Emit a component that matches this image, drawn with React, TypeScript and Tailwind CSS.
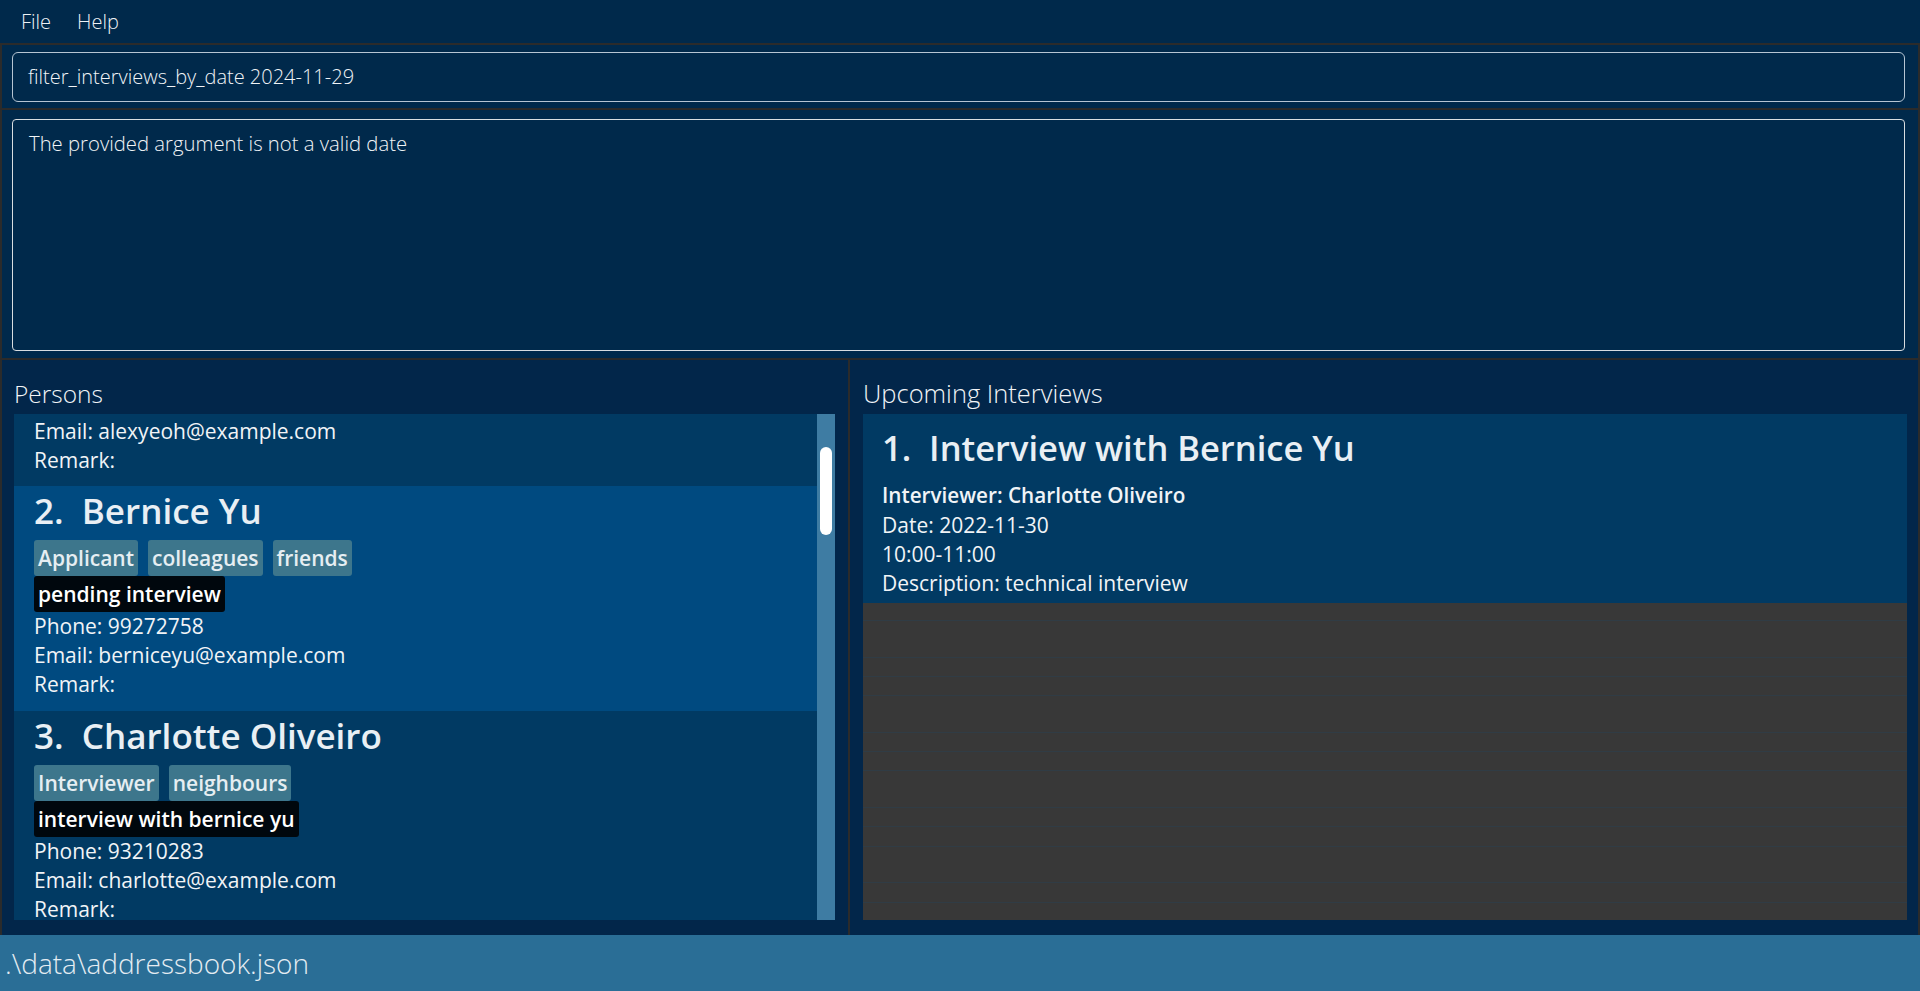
import React from "react";

type Person = {
  index: number;
  name: string;
  tags: string[];
  note: string;
  phone: string;
  email: string;
  selected?: boolean;
};

const people: Person[] = [
  {
    index: 2,
    name: "Bernice Yu",
    tags: ["Applicant", "colleagues", "friends"],
    note: "pending interview",
    phone: "99272758",
    email: "berniceyu@example.com",
    selected: true,
  },
  {
    index: 3,
    name: "Charlotte Oliveiro",
    tags: ["Interviewer", "neighbours"],
    note: "interview with bernice yu",
    phone: "93210283",
    email: "charlotte@example.com",
  },
];

// empty ListView cells under the single interview card
const emptyRows = [18, 37, 19, 19, 37, 19, 19, 37, 19, 20, 36, 20, 17];

function Field({ children }: { children: React.ReactNode }) {
  return <div className="h-[29px] leading-[29px] text-[21px] whitespace-pre">{children}</div>;
}

function PersonCard({ p }: { p: Person }) {
  return (
    <div className={`pl-[20px] pt-[4px] pb-[12px] ${p.selected ? "bg-[#004a80]" : "bg-[#013a63]"}`}>
      <div className="h-[42px] leading-[42px] text-[35px] font-semibold text-[#e9eff4] whitespace-pre">
        {p.index}.  {p.name}
      </div>
      <div className="mt-[8px] flex gap-[10px]">
        {p.tags.map((t) => (
          <span
            key={t}
            className="h-[36px] leading-[36px] px-[4px] rounded-[3px] bg-[#3d768c] text-[21px] font-semibold text-[#e6eef2]"
          >
            {t}
          </span>
        ))}
      </div>
      <div className="flex">
        <span className="h-[36px] leading-[36px] px-[4px] rounded-[3px] bg-[#00070d] text-[21px] font-semibold text-white">
          {p.note}
        </span>
      </div>
      <Field>Phone: {p.phone}</Field>
      <Field>Email: {p.email}</Field>
      <Field>Remark: </Field>
    </div>
  );
}

export default function App() {
  return (
    <div className="w-[1920px] h-[991px] overflow-hidden flex flex-col bg-[#00294b] text-[#f1f4f7] font-['Open_Sans',sans-serif]">
      {/* menu bar */}
      <div className="h-[43px] flex items-center gap-[26px] pl-[21px] text-[20px] font-light text-[#eef2f5]">
        <span>File</span>
        <span>Help</span>
      </div>
      <div className="h-[2px] bg-[#2b2b2b]" />

      {/* command box */}
      <div className="h-[63px] border-x-2 border-[#2b2b2b] pt-[7px] pb-[6px] pl-[10px] pr-[13px]">
        <div className="h-full rounded-[6px] border-[1.5px] border-[#b6c5d3] flex items-center px-[15px] text-[20px] font-light">
          filter_interviews_by_date 2024-11-29
        </div>
      </div>
      <div className="h-[2px] bg-[#2b2b2b]" />

      {/* result display */}
      <div className="h-[248px] border-x-2 border-[#2b2b2b] pt-[9px] pb-[7px] pl-[10px] pr-[13px]">
        <div className="h-full rounded-[4px] border border-[#d9dde0] px-[16px] pt-[8px] text-[20.3px] font-light">
          The provided argument is not a valid date
        </div>
      </div>
      <div className="h-[2px] bg-[#2b2b2b]" />

      {/* list panels */}
      <div className="h-[575px] flex bg-[#02264a]">
        <div className="w-[850px] border-x-2 border-[#2b2b2b] pt-[18px] pl-[12px] pr-[13px]">
          <div className="h-[31px] leading-[31px] text-[24.5px] font-light">Persons</div>
          <div className="mt-[5px] h-[506px] flex overflow-hidden">
            <div className="flex-1 overflow-hidden">
              <div className="pl-[20px] pt-[3px] pb-[11px] bg-[#013a63]">
                <Field>Email: alexyeoh@example.com</Field>
                <Field>Remark: </Field>
              </div>
              {people.map((p) => (
                <PersonCard key={p.index} p={p} />
              ))}
            </div>
            <div className="w-[18px] bg-[#3e7ca3] pt-[33px] flex justify-center">
              <div className="w-[12px] h-[88px] rounded-full bg-white" />
            </div>
          </div>
        </div>

        <div className="flex-1 border-r-2 border-[#2b2b2b] pt-[18px] pl-[13px] pr-[11px]">
          <div className="h-[31px] leading-[31px] text-[25.5px] font-light">Upcoming Interviews</div>
          <div className="mt-[5px] h-[506px] overflow-hidden flex flex-col">
            <div className="bg-[#013a63] pl-[19px] pt-[13px] pb-[5px]">
              <div className="h-[42px] leading-[42px] text-[34.5px] font-semibold text-[#e9eff4] whitespace-pre">
                1.  Interview with Bernice Yu
              </div>
              <div className="mt-[10px] h-[32px] leading-[32px] text-[20.7px] font-semibold">
                Interviewer: Charlotte Oliveiro
              </div>
              <Field>Date: 2022-11-30</Field>
              <Field>10:00-11:00</Field>
              <Field>Description: technical interview</Field>
            </div>
            {emptyRows.map((h, i) => (
              <div
                key={i}
                style={{ height: h }}
                className={`bg-[#383838] ${i < emptyRows.length - 1 ? "border-b border-[#303c45]" : ""}`}
              />
            ))}
          </div>
        </div>
      </div>

      {/* status bar */}
      <div className="flex-1 bg-[#2a6e96] flex items-center px-[5px] text-[28px] font-light text-[#e4ecf2]">
        .\data\addressbook.json
      </div>
    </div>
  );
}
